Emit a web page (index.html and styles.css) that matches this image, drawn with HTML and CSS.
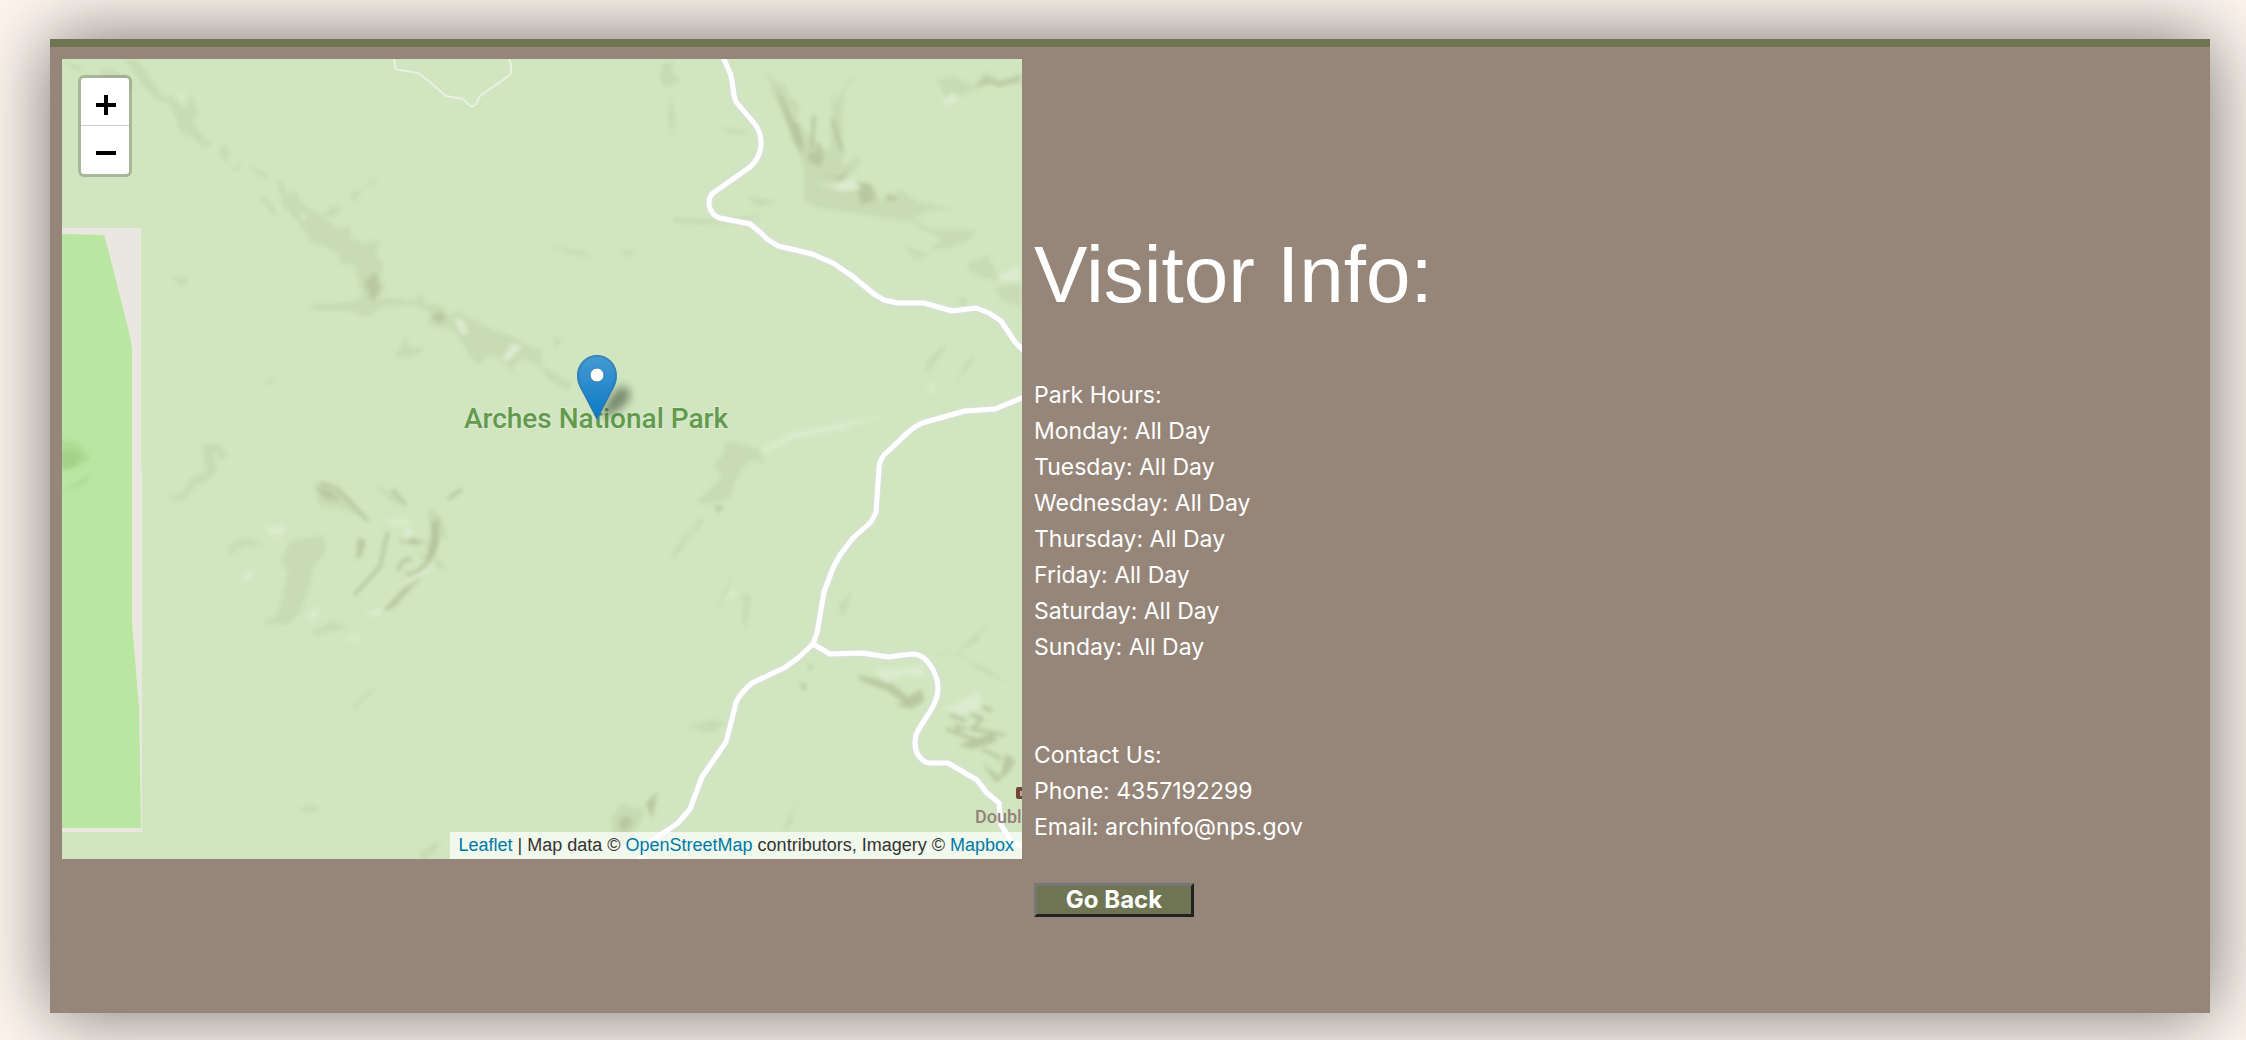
FILE: index.html
```html
<!DOCTYPE html>
<html lang="en">
<head>
<meta charset="utf-8">
<title>Arches National Park</title>
<link rel="stylesheet" href="styles.css">
</head>
<body>
<main class="panel">
  <section class="map" aria-label="Park map">
    <svg class="map-tiles" viewBox="0 0 960 800" preserveAspectRatio="xMidYMid slice" role="img" aria-label="Map of Arches National Park">
      <defs>
        <filter id="soft" x="-5%" y="-5%" width="110%" height="110%"><feGaussianBlur stdDeviation="2"/></filter>
        <filter id="pinShade" x="-40%" y="-40%" width="180%" height="180%"><feGaussianBlur stdDeviation="5"/></filter>
        <linearGradient id="pinFill" x1="0" y1="0" x2="0" y2="1">
          <stop offset="0" stop-color="#459bd1"/><stop offset="1" stop-color="#0b78c6"/>
        </linearGradient>
        <g id="roads" fill="none" stroke-linecap="round" stroke-linejoin="round">
          <path d="M662 0L668 14C672 24 670 38 675 44L692 64C702 76 702 96 688 108L651 134C643 142 648 156 658 159L688 165L698 173L705 180L716 187L750 195L771 204L790 217L812 235L822 241L836 244H862L890 252L914 249L927 254L939 262L953 283L962 292"/>
          <path d="M962 338L933 350L903 352L860 364Q848 370 838 381L822 396Q817 402 817 410L814 453L809 463L791 479L778 496L771 509L762 533L755 574L751 585L736 599L722 609L690 624Q674 638 673 648L664 683L640 718L628 750L616 764L588 783L578 802"/>
          <path d="M751 585L768 595L800 594L826 598L850 595C868 595 876 620 876 629C876 648 858 664 854 676C850 694 860 704 869 704H886L915 721L924 733L937 744L939 766L950 783L962 788"/>
        </g>
      </defs>
      <rect width="960" height="800" fill="#d1e6c0"/>

      <!-- western boundary -->
      <path d="M0 169H80V773H0z" fill="#eae7e0"/>
      <path d="M0 175L42 176L46 190L67 273L70 289V564L73 600L77 648L79 769H0z" fill="#b9e6a1"/>
      <path d="M80 169V411" stroke="#c5e5b1" fill="none"/>
      <path d="M0 381L15 383L29 400L18 406L0 412z" fill="#addb93" filter="url(#soft)"/>
      <path d="M0 391L20 396L12 407L0 411z" fill="#a4d087" filter="url(#soft)"/>
      <path d="M0 436L10 426L28 416L24 424L8 430z" fill="#addb93" filter="url(#soft)"/>

      <!-- terrain shading -->
      <g filter="url(#soft)">
        <g fill="#c8dbb4">
          <path d="M0 3L16 5L24 12L14 12zM36 12L50 10L66 18L74 32L60 24L46 22zM62 0H76L88 18L100 37H110L122 50L130 36L136 56L130 62L140 76L150 86L140 88L130 78L118 74L114 58L106 44L98 43L82 28L72 14z"/>
          <path d="M160 84L168 92L164 104L158 98zM170 110L180 104L176 116zM186 106L200 112L208 120L196 117zM214 120L222 126L226 142L218 154L220 138zM196 137L206 140L216 154L210 156L204 146z"/>
          <path d="M226 134L234 132L238 142L252 152L262 156L276 170L290 166L288 178L302 184L318 180L314 196L322 204L318 220L324 228L316 240L330 238L352 242L360 232L362 244L378 246L386 256L404 248L398 256L416 262L432 272L448 276L464 286L480 290V308L462 300L450 308L458 320L440 302L428 296L416 306L408 298L398 280L388 270L366 267L368 254L352 246L322 248L304 258L288 252L260 252L247 250L252 244L276 244L294 242L300 236L292 206L278 206L276 194L264 188L250 184L238 166L224 150z"/>
          <path d="M262 156L270 146L280 150L272 158zM288 138L294 130L300 132L292 144zM304 126L312 120L316 124L306 128zM334 296L344 278L348 288L362 288L360 294L338 300zM110 218L124 218L126 224L118 228zM203 323L216 316L214 321L206 326z"/>
          <path d="M140 386L154 384L166 394L160 402L150 392L156 412L144 424L134 426L124 440L110 442L106 438L120 434L130 418L144 412z"/>
          <path d="M166 488L176 480L188 480L202 486L180 488L168 496zM228 482L246 478L262 476L264 494L252 506L248 528L238 554L226 566L198 566L216 554L222 530L226 514L218 502z"/>
          <path d="M252 420L268 430L284 436L304 460L280 450L256 446zM310 425L326 432L340 440L336 448zM370 446L384 470L386 480L376 478L364 458zM352 492L370 498L380 502L384 512L368 506zM288 568L256 576L248 574L270 562z"/>
          <path d="M235 750L248 746L260 748L248 754zM358 794L372 784L380 784L366 800H358zM290 648L316 624L308 636L294 650z"/>
          <path d="M600 4L612 2L610 14L620 20L610 26L602 30L598 18zM608 34L614 60L608 80L606 56zM660 68L686 72L684 76L664 74zM686 138L706 140L714 144L694 148zM610 158L650 160L706 156L680 164L640 166L612 164z"/>
          <path d="M700 10L714 22L722 24L728 38L738 46L734 60L744 72L752 84L768 92L770 30L774 44L786 20L794 14L784 28L780 56L782 92L780 106L800 96L794 112L778 120L790 130L810 126L820 142L838 130L854 142L892 150L866 152L850 160L870 170L896 170L916 172L906 182L886 190L868 190L880 180L850 164L818 158L790 154L750 148L742 140V112L734 84L722 58L712 38L706 20z"/>
          <path d="M874 20L892 18L912 26L924 12L938 20L960 14V26L930 24L906 34L892 42L882 36zM904 204L926 196L932 208L938 222L924 220L908 212zM932 228L960 224V248L940 242zM842 186L858 192L868 198L852 200zM894 236L906 240L902 250z"/>
          <path d="M664 381L696 390L704 404L686 402L674 420L668 440L640 446L636 442L660 418L652 406L660 396zM638 458L644 460L630 476L622 484zM612 492L626 472L622 488L608 504zM654 548L670 516L664 540L658 548zM680 534L690 538L684 570L680 560L682 546zM776 546L790 532L786 548L780 558zM866 300L884 284L880 296L862 316zM904 304L916 290L908 306L892 326z"/>
          <path d="M846 585L880 596L900 594L914 610L928 616L946 626L932 614L910 602L896 596L866 592zM904 584L926 564L914 584L898 592zM624 668L652 660L664 664L650 674zM548 760L560 744L584 752L570 780L552 784zM722 768L736 742L730 764L724 774z"/>
          <path d="M478 306L496 316L510 324L506 332L494 326L484 318zM490 276L500 282L494 290zM486 186L520 192L534 198L510 196zM556 190L576 194L566 198z"/>
        </g>
        <g fill="#b9c89f">
          <path d="M302 224L314 212L318 232L310 242zM370 256L380 252L384 262L374 264zM714 30L722 40L736 72L742 96L732 84zM746 92L754 94L756 80L762 98L758 108L746 102zM760 115L774 118L788 112L780 122zM792 124L808 124L814 140L800 146zM822 134L838 140L826 142z"/>
          <path d="M336 481L350 479L366 484L354 486L342 484zM372 462L378 458L376 486L372 498L364 500zM318 552L340 530L366 504L362 516L330 550zM296 478L304 482L300 496L294 502zM252 428L270 432L280 442L264 440z"/>
          <path d="M794 616L814 620L832 626L846 638L860 630L862 642L850 650L832 646L842 644L826 632L800 622zM896 686L930 674L936 682L910 690zM920 704L938 718L944 694L954 702L946 714L934 724zM892 664L908 670L894 672zM652 446L662 448L656 454zM746 605L752 608L748 612zM738 622L746 628L740 632z"/>
          <path d="M914 28L924 18L938 24L960 16V20L938 28L926 24zM556 762L566 756L572 764L560 774zM584 744L596 732L590 760z"/>
        </g>
        <g fill="none" stroke="#b3c299" stroke-width="3">
          <path d="M258 424L276 430L306 462M330 430L344 446M326 472L318 508L292 536M350 500Q338 500 336 512M370 464L374 486M898 650L920 660L910 670L944 676M884 670L916 682M920 690L940 700M902 640L930 652M888 656L904 662M752 56L750 90M734 64L740 88M770 60L780 92M376 480Q368 504 360 508Q350 518 344 514M386 440L400 430"/>
        </g>
        <g fill="#dcebcf">
          <path d="M116 38L124 34L120 44zM174 116L176 110L178 118zM214 150L218 146L220 152zM238 154L244 156L242 162zM392 258L402 262L406 276L398 274zM450 284L460 288L446 302L440 300zM204 468L224 466L218 478L206 474zM326 460L350 462L344 466L330 466zM184 514L192 510L188 522L180 520zM340 470L352 470L344 484zM302 556L320 548L348 520L376 500L368 512L340 530L316 556zM246 554L258 548L250 566zM280 580L296 576L298 582z"/>
          <path d="M754 124L770 126L790 120L800 130L780 132zM880 44L890 34L898 38L886 48zM934 218L958 206V222L940 222zM700 390L730 374L770 366L820 356L780 370L730 380L704 394zM812 610L840 610L860 606L866 618L840 616L824 624zM882 650L902 640L918 632L920 650L902 656zM656 546L670 530L676 534L664 540zM866 330L872 322L870 336z"/>
        </g>
      </g>

      <!-- trail and roads -->
      <path d="M332 0L333 8Q333 11 337 11L356 14L368 23L384 37L401 40L407 46Q411 49 414 45L418 37L448 16Q451 8 447 0" fill="none" stroke="#e9f0e0" stroke-width="2"/>
      <use href="#roads" stroke="#dcdedf" stroke-width="7"/>
      <use href="#roads" stroke="#fff" stroke-width="5"/>

      <!-- place labels -->
      <text class="place-label" x="534" y="369" text-anchor="middle">Arches National Park</text>
      <text class="poi-label" x="913" y="764">Doubl</text>
      <rect x="954" y="728" width="12" height="12" rx="2" fill="#724738"/>
      <rect x="958" y="732" width="4" height="5" fill="#bca99d"/>

      <!-- marker -->
      <path d="M537 358L548 338Q562 318 568 334Q568 346 548 356z" fill="#3d4b35" opacity=".6" filter="url(#pinShade)"/>
      <path d="M535 296C524 296 515 305 515 317C515 323 518 329 521 334L535 361L549 334C552 329 555 323 555 317C555 305 546 296 535 296z" fill="url(#pinFill)"/>
      <path d="M535 297C525 297 516 305 516 317C516 323 519 329 522 334L535 359L548 334C551 329 554 323 554 317C554 305 545 297 535 297z" fill="none" stroke="#2e73a8" stroke-width="2" opacity=".5"/>
      <circle cx="535" cy="316" r="7" fill="#fff" stroke="#2e7fb8" stroke-width="1"/>
    </svg>
    <div class="zoom-control">
      <button class="zoom-button" type="button" aria-label="Zoom in"><svg width="20" height="20" viewBox="0 0 20 20" aria-hidden="true"><path d="M0 10H20M10 0V20" stroke="#000" stroke-width="4"/></svg></button>
      <button class="zoom-button" type="button" aria-label="Zoom out"><svg width="20" height="20" viewBox="0 0 20 20" aria-hidden="true"><path d="M0 10H20" stroke="#000" stroke-width="4"/></svg></button>
    </div>
    <div class="attribution"><a href="#leaflet">Leaflet</a> | Map data © <a href="#osm">OpenStreetMap</a> contributors, Imagery © <a href="#mapbox">Mapbox</a></div>
  </section>

  <section class="info">
    <h1 class="info-title">Visitor Info:</h1>
    <div class="info-block">
      <p>Park Hours:</p>
      <p>Monday: All Day</p>
      <p>Tuesday: All Day</p>
      <p>Wednesday: All Day</p>
      <p>Thursday: All Day</p>
      <p>Friday: All Day</p>
      <p>Saturday: All Day</p>
      <p>Sunday: All Day</p>
    </div>
    <div class="info-block">
      <p>Contact Us:</p>
      <p>Phone: 4357192299</p>
      <p>Email: archinfo@nps.gov</p>
    </div>
    <button class="back-button" type="button">Go Back</button>
  </section>
</main>
</body>
</html>
```

FILE: styles.css
```css
* {
  box-sizing: border-box;
}

body {
  margin: 0;
  padding: 39px 36px 27px 50px;
  background: #fdf5ee;
  color: #fff;
  font-family: Inter, "Liberation Sans", sans-serif;
  font-size: 23px;
  line-height: 36px;
}

.panel {
  display: grid;
  grid-template-columns: 80fr 97fr;
  gap: 12px;
  align-items: start;
  padding: 12px;
  border-top: 8px solid #6f7553;
  background: #958679;
  box-shadow: 0 0 70px rgba(0, 0, 0, 0.54);
}

.map {
  position: relative;
  aspect-ratio: 6 / 5;
  overflow: hidden;
}

.map-tiles {
  display: block;
  width: 100%;
  height: 100%;
}

.place-label {
  font-family: Roboto, sans-serif;
  font-size: 28px;
  font-weight: 500;
  fill: #629a4e;
  stroke: #dcebcf;
  stroke-width: 2px;
  paint-order: stroke;
}

.poi-label {
  font-family: Roboto, sans-serif;
  font-size: 18px;
  font-weight: 500;
  fill: #93807a;
}

.zoom-control {
  position: absolute;
  top: 16px;
  left: 16px;
  display: flex;
  flex-direction: column;
  width: 54px;
  border: 3px solid rgba(0, 0, 0, 0.2);
  border-radius: 6px;
  background: #fff;
  background-clip: padding-box;
}

.zoom-button {
  display: flex;
  align-items: center;
  justify-content: center;
  height: 48px;
  padding: 6px 0 0 2px;
  border: 0;
  background: none;
}

.zoom-button:first-child {
  border-bottom: 1px solid #ccc;
}

.attribution {
  position: absolute;
  right: 0;
  bottom: 0;
  padding: 0 8px;
  background: rgba(255, 255, 255, 0.7);
  color: #333;
  font-family: "Liberation Sans", Arial, sans-serif;
  font-size: 18px;
  line-height: 27px;
}

.attribution a {
  color: #0078a8;
  text-decoration: none;
}

.info {
  padding: 166px 0 84px;
}

.info-title {
  margin: 0 0 52px;
  font-family: "Liberation Sans", Arial, sans-serif;
  font-size: 80px;
  font-weight: 400;
  line-height: 100px;
}

.info-block {
  margin-bottom: 72px;
}

.info-block p {
  margin: 0;
}

.info-block:last-of-type {
  margin-bottom: 38px;
}

.back-button {
  display: block;
  min-width: 160px;
  height: 34px;
  padding: 0 24px;
  border: 3px solid;
  border-color: #767676 #212121 #212121 #767676;
  background: #6f7553;
  color: #fff;
  font-family: inherit;
  font-size: 24px;
  font-weight: 700;
  line-height: 28px;
}
```
